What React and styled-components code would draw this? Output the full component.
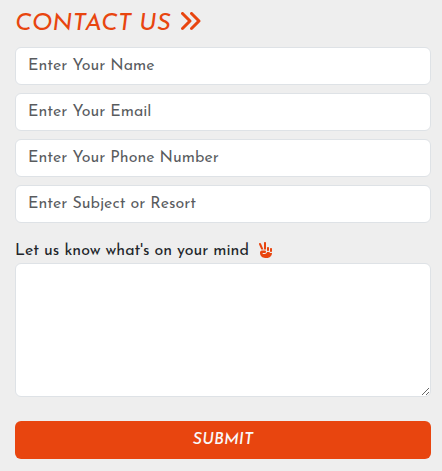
import React from "react";
import styled, { createGlobalStyle, css } from "styled-components";
import { FaAnglesRight, FaHandPeace } from "react-icons/fa6";

const GlobalStyle = createGlobalStyle`
  *, *::before, *::after { box-sizing: border-box; }
  body {
    margin: 0;
    background: #eeeeee;
    color: #212529;
    font: 400 16px/24px "Josefin Sans", Lato, sans-serif;
    overflow: hidden;
  }
`;

const Form = styled.form`
  display: flex;
  flex-direction: column;
  height: 471px;
  padding: 6px 11px 12px 15px;
`;

const Title = styled.h2`
  display: flex;
  align-items: center;
  gap: 8px;
  height: 31px;
  margin: 0 0 10px;
  color: #e8450f;
  font-size: 24px;
  font-style: italic;
  font-weight: 400;
  line-height: 31px;
  white-space: nowrap;
  span { padding-top: 5px; }
  svg { margin-top: -1px; }
`;

const Fields = styled.div`
  display: flex;
  flex-direction: column;
  gap: 8px;
`;

const control = css`
  display: block;
  width: 100%;
  margin: 0;
  border: 1px solid #dee2e6;
  border-radius: 6px;
  background: #fff;
  color: #212529;
  font: inherit;
  padding: 6px 12px;
  outline: 0;
`;

const Input = styled.input`
  ${control}
  height: 38px;
  &::placeholder { color: rgba(33, 37, 41, 0.75); opacity: 1; }
`;

const Label = styled.label`
  display: flex;
  align-items: center;
  gap: 9px;
  height: 24px;
  margin-top: 16px;
  white-space: nowrap;
  svg { color: #e8450f; margin-top: -3px; }
`;

const TextArea = styled.textarea`
  ${control}
  height: 134px;
  resize: vertical;
`;

const Submit = styled.button`
  height: 38px;
  margin-top: 24px;
  padding: 0;
  border: 0;
  border-radius: 6px;
  background: #e8450f;
  color: #f8f9fa;
  font: italic 500 16px/24px "Josefin Sans", Lato, sans-serif;
`;

const fields = [
  { name: "name", text: "Enter Your Name" },
  { name: "email", text: "Enter Your Email" },
  { name: "phone", text: "Enter Your Phone Number" },
  { name: "subject", text: "Enter Subject or Resort" },
];

export default function App() {
  return (
    <>
      <GlobalStyle />
      <Form>
        <Title>
          <span>CONTACT US</span>
          <FaAnglesRight size={24} />
        </Title>
        <Fields>
          {fields.map((f) => (
            <Input key={f.name} name={f.name} placeholder={f.text} />
          ))}
        </Fields>
        <Label htmlFor="message">
          <span>Let us know what's on your mind</span>
          <FaHandPeace size={16} />
        </Label>
        <TextArea id="message" />
        <Submit type="button">SUBMIT</Submit>
      </Form>
    </>
  );
}
